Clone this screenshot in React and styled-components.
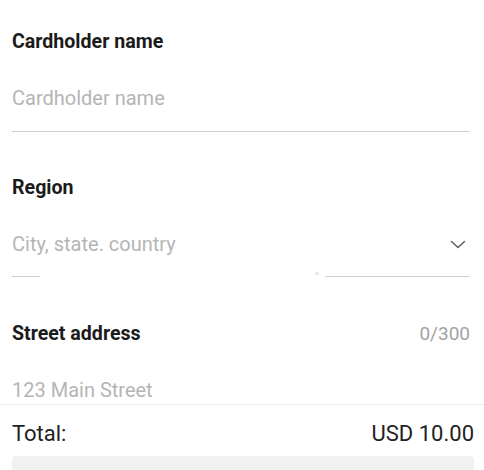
import styled, { createGlobalStyle } from "styled-components";

const GlobalStyle = createGlobalStyle`
  html, body {
    margin: 0;
    padding: 0;
    background: #ffffff;
  }
  body {
    font-family: Roboto, "Noto Sans", "Liberation Sans", sans-serif;
  }
`

const fields = [
	{label: "Cardholder name", placeholder: "Cardholder name"},
	{label: "Region", placeholder: "City, state. country", select: true},
	{label: "Street address", placeholder: "123 Main Street", counter: "0/300"},
]

const Chevron = () => (
	<svg width="16" height="9" viewBox="0 0 16 9" fill="none">
		<polyline points="1.5,1.5 8,7.5 14.5,1.5" stroke="#5f5f5f" strokeWidth="1.5" strokeLinecap="round" strokeLinejoin="round"/>
	</svg>
)

export default function App() {
	return (
		<>
			<GlobalStyle/>
			<Page>
				<Form>
					{fields.map((f) => (
						<Field key={f.label}>
							<LabelRow>
								<Label>{f.label}</Label>
								{f.counter && <Counter>{f.counter}</Counter>}
							</LabelRow>
							<InputRow $broken={f.select}>
								<Placeholder>{f.placeholder}</Placeholder>
								{f.select && <Chevron/>}
								{f.select && <Ripple/>}
							</InputRow>
						</Field>
					))}
				</Form>
				<Footer>
					<TotalRow>
						<span>Total:</span>
						<span>USD 10.00</span>
					</TotalRow>
					<PayButton/>
				</Footer>
			</Page>
		</>
	)
}

const Page = styled.div`
  width: 484px;
  height: 470px;
  display: flex;
  flex-direction: column;
  overflow: hidden;
`

const Form = styled.div`
  flex: 1;
  min-height: 0;
  overflow: hidden;
  padding: 32px 14px 0 12px;
  display: flex;
  flex-direction: column;
  gap: 46px;
`

const Field = styled.div`
  display: flex;
  flex-direction: column;
  gap: 16px;
`

const LabelRow = styled.div`
  display: flex;
  justify-content: space-between;
  align-items: baseline;
`

const Label = styled.span`
  font-size: 19.6px;
  line-height: 20px;
  font-weight: 700;
  color: #1b1b1b;
`

const Counter = styled.span`
  font-size: 19px;
  line-height: 20px;
  color: #a3a3a3;
`

const InputRow = styled.div`
  position: relative;
  height: 60px;
  padding: 0 4px 3px 0;
  display: flex;
  align-items: center;
  justify-content: space-between;
  border-bottom: 1px solid ${({$broken}) => ($broken ? "transparent" : "#cfcfcf")};
  background: ${({$broken}) => $broken
		? "linear-gradient(to right, #cfcfcf 0 28px, transparent 28px 313px, #cfcfcf 313px) bottom / 100% 1px no-repeat"
		: "none"};
`

const Ripple = styled.span`
  position: absolute;
  left: 303px;
  bottom: 2px;
  width: 4px;
  height: 3px;
  border-radius: 50%;
  background: #e4e4e4;
`

const Placeholder = styled.span`
  font-size: 20px;
  line-height: 24px;
  color: #b5b5b5;
`

const Footer = styled.div`
  flex: none;
  height: 66px;
  box-sizing: border-box;
  border-top: 1px solid #ececec;
  padding: 16px 10px 0 12px;
  display: flex;
  flex-direction: column;
  gap: 9px;
  overflow: hidden;
`

const TotalRow = styled.div`
  display: flex;
  justify-content: space-between;
  font-size: 22px;
  line-height: 26px;
  color: #222222;
`

const PayButton = styled.div`
  flex: none;
  height: 48px;
  border-radius: 4px;
  background: #f1f1f1;
`
